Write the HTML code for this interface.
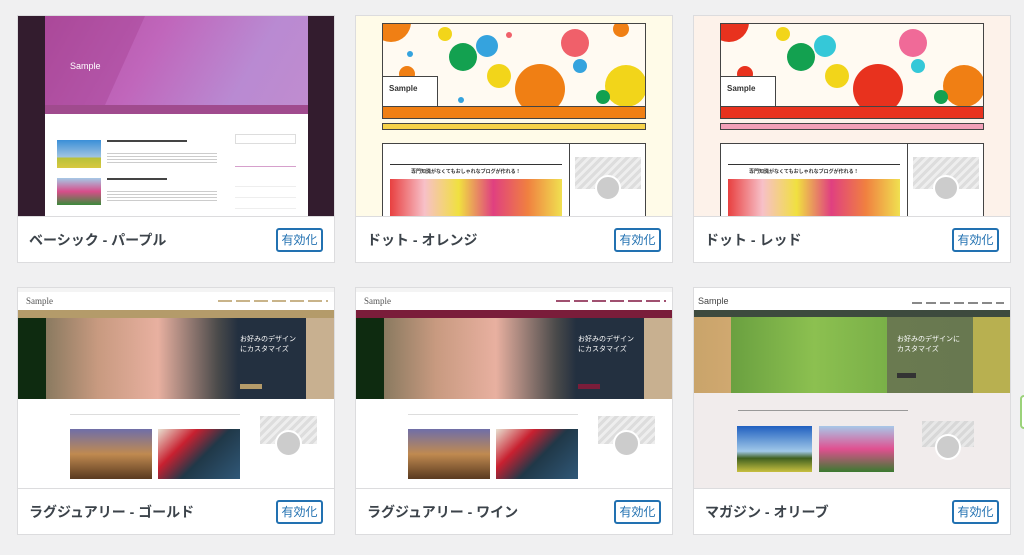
<!DOCTYPE html>
<html><head><meta charset="utf-8"><style>
*{margin:0;padding:0;box-sizing:border-box}
body{width:1024px;height:555px;background:#f0f0f1;position:relative;overflow:hidden;font-family:"Liberation Sans","Noto Sans CJK JP",sans-serif}
.card{position:absolute;width:318px;height:248px;background:#fff;border:1px solid #dcdcde;overflow:hidden}
.th{position:absolute;left:0;top:0;width:316px;height:200px;overflow:hidden}
.lb{position:absolute;left:0;top:200px;width:316px;height:46px;border-top:1px solid #dcdcde;background:#fff}
.lb h3{position:absolute;left:11px;top:13px;font-size:14px;font-weight:bold;color:#3c434a}
.btn{position:absolute;right:11px;top:11px;width:47px;height:24px;border:2px solid #2271b1;border-radius:3px;color:#2271b1;font-size:12px;text-align:center;line-height:20px;background:#fff}
.a{position:absolute}
.c{border-radius:50%;position:absolute}
</style></head><body>

<!-- Card 1 -->
<div class="card" style="left:17px;top:15px">
 <div class="th" style="background:#331c2e">
  <div class="a" style="left:27px;top:0;width:263px;height:200px;background:#fff"></div>
  <div class="a" style="left:27px;top:0;width:263px;height:89px;background:linear-gradient(120deg,#b04fa0 0%,#c066bb 40%,#b98ad2 75%,#c08ccf 100%)"></div>
  <div class="a" style="left:27px;top:0;width:100px;height:89px;background:rgba(160,60,140,.35);clip-path:polygon(0 0,100% 0,60% 100%,0 100%)"></div>
  <div class="a" style="left:52px;top:45px;color:#fff;font-size:9px">Sample</div>
  <div class="a" style="left:27px;top:89px;width:263px;height:9px;background:#a04b8e"></div>
  <div class="a" style="left:39px;top:124px;width:44px;height:28px;background:linear-gradient(#3a8fd8,#9fc3e0 60%,#b9c13a 65%,#d8c840)"></div>
  <div class="a" style="left:39px;top:162px;width:44px;height:27px;background:linear-gradient(#a5c9e6,#d84d8a 50%,#3b8a3a)"></div>
  <div class="a" style="left:89px;top:124px;width:80px;height:2px;background:#444"></div>
  <div class="a" style="left:89px;top:137px;width:110px;height:12px;background:repeating-linear-gradient(#ccc 0 1px,transparent 1px 3px)"></div>
  <div class="a" style="left:89px;top:162px;width:60px;height:2px;background:#444"></div>
  <div class="a" style="left:89px;top:175px;width:110px;height:12px;background:repeating-linear-gradient(#ccc 0 1px,transparent 1px 3px)"></div>
  <div class="a" style="left:217px;top:118px;width:61px;height:10px;border:1px solid #ddd"></div>
  <div class="a" style="left:217px;top:150px;width:61px;height:1px;background:#d6a0cc"></div>
  <div class="a" style="left:217px;top:160px;width:61px;height:40px;background:repeating-linear-gradient(#fff 0 10px,#eee 10px 11px)"></div>
 </div>
 <div class="lb"><h3>ベーシック - パープル</h3><div class="btn">有効化</div></div>
</div>

<!-- Card 2 -->
<div class="card" style="left:355px;top:15px">
 <div class="th" style="background:#fffbe8">
  <div class="a" style="left:26px;top:7px;width:264px;height:96px;border:1px solid #444;background:#fffaf2;overflow:hidden">
   <div class="c" style="left:-12px;top:-22px;width:40px;height:40px;background:#f07f14"></div>
   <div class="c" style="left:55px;top:3px;width:14px;height:14px;background:#f2d51a"></div>
   <div class="c" style="left:93px;top:11px;width:22px;height:22px;background:#35a3de"></div>
   <div class="c" style="left:66px;top:19px;width:28px;height:28px;background:#13a150"></div>
   <div class="c" style="left:24px;top:27px;width:6px;height:6px;background:#35a3de"></div>
   <div class="c" style="left:123px;top:8px;width:6px;height:6px;background:#f0606a"></div>
   <div class="c" style="left:178px;top:5px;width:28px;height:28px;background:#f0606a"></div>
   <div class="c" style="left:230px;top:-3px;width:16px;height:16px;background:#f07f14"></div>
   <div class="c" style="left:104px;top:40px;width:24px;height:24px;background:#f2d51a"></div>
   <div class="c" style="left:132px;top:40px;width:50px;height:50px;background:#f07f14"></div>
   <div class="c" style="left:190px;top:35px;width:14px;height:14px;background:#35a3de"></div>
   <div class="c" style="left:222px;top:41px;width:42px;height:42px;background:#f2d51a"></div>
   <div class="c" style="left:213px;top:66px;width:14px;height:14px;background:#13a150"></div>
   <div class="c" style="left:16px;top:42px;width:16px;height:16px;background:#f07f14"></div>
   <div class="c" style="left:75px;top:73px;width:6px;height:6px;background:#35a3de"></div>
   <div class="a" style="left:-1px;top:52px;width:56px;height:31px;background:#fff;border:1px solid #444"></div>
   <div class="a" style="left:6px;top:60px;font-size:8px;font-weight:bold;color:#333">Sample</div>
   <div class="a" style="left:0;top:82px;width:264px;height:14px;background:#f07f14;border-top:1px solid #444"></div>
  </div>
  <div class="a" style="left:26px;top:107px;width:264px;height:7px;background:#f6d24a;border:1px solid #444"></div>
  <div class="a" style="left:26px;top:127px;width:264px;height:80px;border:1px solid #444;background:#fff">
   <div class="a" style="left:186px;top:0;width:1px;height:80px;background:#444"></div>
   <div class="a" style="left:7px;top:20px;width:172px;height:1px;background:#333"></div>
   <div class="a" style="left:7px;top:35px;width:172px;height:45px;background:linear-gradient(90deg,#e84040,#f7c0c8,#f0e040,#e04080,#f08040,#f0e050)"></div>
   <div class="a" style="left:192px;top:13px;width:66px;height:32px;background:repeating-linear-gradient(135deg,#ddd 0 3px,#eee 3px 6px)"></div>
   <div class="c" style="left:212px;top:31px;width:26px;height:26px;background:#ccc;border:2px solid #fff"></div>
  </div>
  <div class="a" style="left:55px;top:152px;font-size:5px;font-weight:bold;color:#333">専門知識がなくてもおしゃれなブログが作れる！</div>
 </div>
 <div class="lb"><h3>ドット - オレンジ</h3><div class="btn">有効化</div></div>
</div>

<!-- Card 3 -->
<div class="card" style="left:693px;top:15px">
 <div class="th" style="background:#fdf2ea">
  <div class="a" style="left:26px;top:7px;width:264px;height:96px;border:1px solid #444;background:#fffaf2;overflow:hidden">
   <div class="c" style="left:-12px;top:-22px;width:40px;height:40px;background:#e8321e"></div>
   <div class="c" style="left:55px;top:3px;width:14px;height:14px;background:#f2d51a"></div>
   <div class="c" style="left:93px;top:11px;width:22px;height:22px;background:#35c8d8"></div>
   <div class="c" style="left:66px;top:19px;width:28px;height:28px;background:#13a150"></div>
   <div class="c" style="left:178px;top:5px;width:28px;height:28px;background:#f06a98"></div>
   <div class="c" style="left:104px;top:40px;width:24px;height:24px;background:#f2d51a"></div>
   <div class="c" style="left:132px;top:40px;width:50px;height:50px;background:#e8321e"></div>
   <div class="c" style="left:190px;top:35px;width:14px;height:14px;background:#35c8d8"></div>
   <div class="c" style="left:222px;top:41px;width:42px;height:42px;background:#f07f14"></div>
   <div class="c" style="left:213px;top:66px;width:14px;height:14px;background:#13a150"></div>
   <div class="c" style="left:16px;top:42px;width:16px;height:16px;background:#e8321e"></div>
   <div class="a" style="left:-1px;top:52px;width:56px;height:31px;background:#fff;border:1px solid #444"></div>
   <div class="a" style="left:6px;top:60px;font-size:8px;font-weight:bold;color:#333">Sample</div>
   <div class="a" style="left:0;top:82px;width:264px;height:14px;background:#e8321e;border-top:1px solid #444"></div>
  </div>
  <div class="a" style="left:26px;top:107px;width:264px;height:7px;background:#f2a0b8;border:1px solid #444"></div>
  <div class="a" style="left:26px;top:127px;width:264px;height:80px;border:1px solid #444;background:#fff">
   <div class="a" style="left:186px;top:0;width:1px;height:80px;background:#444"></div>
   <div class="a" style="left:7px;top:20px;width:172px;height:1px;background:#333"></div>
   <div class="a" style="left:7px;top:35px;width:172px;height:45px;background:linear-gradient(90deg,#e84040,#f7c0c8,#f0e040,#e04080,#f08040,#f0e050)"></div>
   <div class="a" style="left:192px;top:13px;width:66px;height:32px;background:repeating-linear-gradient(135deg,#ddd 0 3px,#eee 3px 6px)"></div>
   <div class="c" style="left:212px;top:31px;width:26px;height:26px;background:#ccc;border:2px solid #fff"></div>
  </div>
  <div class="a" style="left:55px;top:152px;font-size:5px;font-weight:bold;color:#333">専門知識がなくてもおしゃれなブログが作れる！</div>
 </div>
 <div class="lb"><h3>ドット - レッド</h3><div class="btn">有効化</div></div>
</div>

<!-- Card 4 -->
<div class="card" style="left:17px;top:287px">
 <div class="th" style="background:#fff">
  <div class="a" style="left:0;top:0;width:316px;height:4px;background:#f4f4f4"></div>
  <div class="a" style="left:8px;top:8px;font-family:'Liberation Serif',serif;font-size:9px;color:#555">Sample</div>
  <div class="a" style="left:200px;top:12px;width:110px;height:2px;background:repeating-linear-gradient(90deg,#c9b48a 0 14px,transparent 14px 18px)"></div>
  <div class="a" style="left:0;top:22px;width:316px;height:8px;background:#b49b6a"></div>
  <div class="a" style="left:0;top:30px;width:316px;height:81px;background:linear-gradient(90deg,#0e2b10 0,#0e2b10 28px,#8a7a60 28px,#c89a80 80px,#e8b0a0 140px,#4a4a4a 200px,#233040 220px,#233040 288px,#c8b090 288px)"></div>
  <div class="a" style="left:222px;top:47px;font-size:7px;color:#fff;line-height:10px">お好みのデザイン<br>にカスタマイズ</div>
  <div class="a" style="left:222px;top:96px;width:22px;height:5px;background:#b49b6a"></div>
  <div class="a" style="left:52px;top:126px;width:170px;height:1px;background:#ddd"></div>
  <div class="a" style="left:52px;top:141px;width:82px;height:50px;background:linear-gradient(#6f6ea8,#c08a50 50%,#5a3a20)"></div>
  <div class="a" style="left:140px;top:141px;width:82px;height:50px;background:linear-gradient(135deg,#e8e0d0 0,#c82030 30%,#203848 55%,#305878)"></div>
  <div class="a" style="left:242px;top:128px;width:57px;height:28px;background:repeating-linear-gradient(135deg,#ddd 0 3px,#eee 3px 6px)"></div>
  <div class="c" style="left:257px;top:142px;width:27px;height:27px;background:#ccc;border:2px solid #fff"></div>
 </div>
 <div class="lb"><h3>ラグジュアリー - ゴールド</h3><div class="btn">有効化</div></div>
</div>

<!-- Card 5 -->
<div class="card" style="left:355px;top:287px">
 <div class="th" style="background:#fff">
  <div class="a" style="left:0;top:0;width:316px;height:4px;background:#f4f4f4"></div>
  <div class="a" style="left:8px;top:8px;font-family:'Liberation Serif',serif;font-size:9px;color:#555">Sample</div>
  <div class="a" style="left:200px;top:12px;width:110px;height:2px;background:repeating-linear-gradient(90deg,#a05070 0 14px,transparent 14px 18px)"></div>
  <div class="a" style="left:0;top:22px;width:316px;height:8px;background:#7a1d3a"></div>
  <div class="a" style="left:0;top:30px;width:316px;height:81px;background:linear-gradient(90deg,#0e2b10 0,#0e2b10 28px,#8a7a60 28px,#c89a80 80px,#e8b0a0 140px,#4a4a4a 200px,#233040 220px,#233040 288px,#c8b090 288px)"></div>
  <div class="a" style="left:222px;top:47px;font-size:7px;color:#fff;line-height:10px">お好みのデザイン<br>にカスタマイズ</div>
  <div class="a" style="left:222px;top:96px;width:22px;height:5px;background:#7a1d3a"></div>
  <div class="a" style="left:52px;top:126px;width:170px;height:1px;background:#ddd"></div>
  <div class="a" style="left:52px;top:141px;width:82px;height:50px;background:linear-gradient(#6f6ea8,#c08a50 50%,#5a3a20)"></div>
  <div class="a" style="left:140px;top:141px;width:82px;height:50px;background:linear-gradient(135deg,#e8e0d0 0,#c82030 30%,#203848 55%,#305878)"></div>
  <div class="a" style="left:242px;top:128px;width:57px;height:28px;background:repeating-linear-gradient(135deg,#ddd 0 3px,#eee 3px 6px)"></div>
  <div class="c" style="left:257px;top:142px;width:27px;height:27px;background:#ccc;border:2px solid #fff"></div>
 </div>
 <div class="lb"><h3>ラグジュアリー - ワイン</h3><div class="btn">有効化</div></div>
</div>

<!-- Card 6 -->
<div class="card" style="left:693px;top:287px">
 <div class="th" style="background:#f1ecec">
  <div class="a" style="left:0;top:0;width:316px;height:22px;background:#fff"></div>
  <div class="a" style="left:4px;top:8px;font-size:9px;color:#444">Sample</div>
  <div class="a" style="left:218px;top:14px;width:92px;height:2px;background:repeating-linear-gradient(90deg,#888 0 10px,transparent 10px 14px)"></div>
  <div class="a" style="left:0;top:22px;width:316px;height:7px;background:#3d4a3e"></div>
  <div class="a" style="left:0;top:29px;width:316px;height:76px;background:linear-gradient(90deg,#c9a46a 0,#d0a870 37px,#6aa040 37px,#8cc050 120px,#7ab048 193px,#6a7a50 193px,#687850 279px,#b8b050 279px)"></div>
  <div class="a" style="left:203px;top:47px;font-size:7px;color:#fff;line-height:10px">お好みのデザインに<br>カスタマイズ</div>
  <div class="a" style="left:203px;top:85px;width:19px;height:5px;background:#333"></div>
  <div class="a" style="left:44px;top:122px;width:170px;height:1px;background:#999"></div>
  <div class="a" style="left:43px;top:138px;width:75px;height:46px;background:linear-gradient(#2060c0,#a0c8e8 55%,#406020 70%,#c8c040)"></div>
  <div class="a" style="left:125px;top:138px;width:75px;height:46px;background:linear-gradient(#a8c8e8,#e05090 50%,#3a7a30)"></div>
  <div class="a" style="left:228px;top:133px;width:52px;height:26px;background:repeating-linear-gradient(135deg,#d8d8d8 0 3px,#e8e8e8 3px 6px)"></div>
  <div class="c" style="left:241px;top:146px;width:26px;height:26px;background:#ccc;border:2px solid #fff"></div>
 </div>
 <div class="lb"><h3>マガジン - オリーブ</h3><div class="btn">有効化</div></div>
</div>

<div class="a" style="left:1020px;top:395px;width:8px;height:34px;border:2px solid #9bd27a;border-radius:4px;background:#fff"></div>
</body></html>
